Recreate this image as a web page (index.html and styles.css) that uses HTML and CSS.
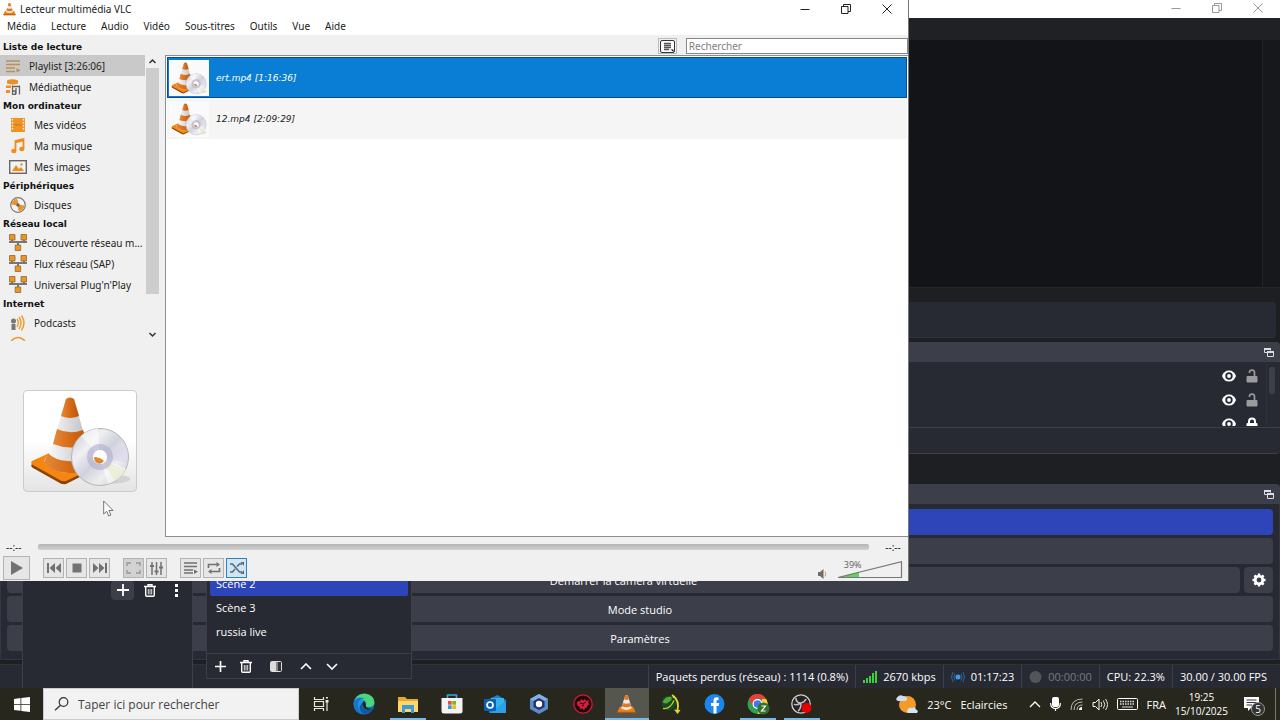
FILE: index.html
```html
<!DOCTYPE html>
<html lang="fr">
<head>
  <meta charset="UTF-8" />
  <meta name="viewport" content="width=device-width, initial-scale=1.0" />
  <title>Lecteur multimédia VLC</title>
  <link rel="stylesheet" href="styles.css">
</head>
<body>
  <!-- shared icons -->
  <svg class="defs" aria-hidden="true">
    <defs>
      <linearGradient id="gOrange" x1="0" x2="1"><stop offset="0" stop-color="#e58a3a"/><stop offset=".5" stop-color="#d66a16"/><stop offset="1" stop-color="#b9560c"/></linearGradient>
      <linearGradient id="gWhite" x1="0" x2="1"><stop offset="0" stop-color="#fff"/><stop offset=".4" stop-color="#e4e4e6"/><stop offset="1" stop-color="#b5b5b8"/></linearGradient>
      <linearGradient id="gDisc" x1="0" y1="0" x2="1" y2="1"><stop offset="0" stop-color="#c4c4cc"/><stop offset=".3" stop-color="#f0f0f4"/><stop offset=".5" stop-color="#cfd2dc"/><stop offset=".7" stop-color="#eeeef0"/><stop offset="1" stop-color="#c2c4c4"/></linearGradient>
      <linearGradient id="gEdge" x1="0" y1="0" x2="1" y2="1"><stop offset="0" stop-color="#36c1d8"/><stop offset=".5" stop-color="#1a8ad8"/><stop offset="1" stop-color="#0c4c98"/></linearGradient>
      <symbol id="cone" viewBox="0 0 20 20">
        <path d="M3 13h14l2.500 5.500q.2 1-.8 1H1.300q-1 0-.8-1z" fill="#f08014"/>
        <path d="M.6 18.200h18.800v1.300H.6z" fill="#b9540a"/>
        <path d="M8.600 1q1.400-.8 2.800 0l4.200 13.600q-5.600 3.400-11.200 0z" fill="#e9e9e9"/>
        <path d="M8.600 1q1.400-.8 2.800 0l1.200 4q-2.600 1.200-5.200 0zM6.200 8.900q3.800 1.600 7.600 0l1.100 3.500q-4.900 2.300-9.800 0z" fill="#e5771a"/>
      </symbol>
      <symbol id="conedisc" viewBox="0 0 112 100">
        <ellipse cx="84" cy="88" rx="22" ry="5" fill="#000" opacity=".1"/>
        <path d="M8 73 32 61l44 15-34 17q-4 1-8-2L9 77q-3-2-1-4z" fill="#8a4206"/>
        <path d="M8 70 32 59l44 15-34 16q-4 1-8-2L9 74q-3-2-1-4z" fill="#f5860f"/>
        <path d="M42 8q4-3 8 0l19 67q-8 8-24 7-20-1-25-12l8-14z" fill="url(#gWhite)"/>
        <path d="M42 8q4-3 8 0l5 17q-9 4-18 0z" fill="url(#gOrange)"/>
        <path d="M33 38q13 6 26 1l5 14q-17 7-35 0z" fill="url(#gOrange)"/>
        <path d="M24 62q6 7 20 8 15 1 23-3l3 8q-8 8-25 7-20-1-25-11z" fill="url(#gOrange)"/>
        <circle cx="76" cy="66" r="28.500" fill="url(#gDisc)" stroke="#b4b5b8"/>
        <path d="M76 66 57 45q8-7 17-8zM76 66l8 27q13-4 18-15z" fill="#fff" opacity=".55"/>
        <path d="M76 66 102 54q3 8 1 18z" fill="#d6d2ea" opacity=".5"/>
        <path d="M76 66l15 24q6-3 10-10z" fill="#e8ebc8" opacity=".6"/>
        <circle cx="76" cy="66" r="10" fill="none" stroke="#b4b1d0" stroke-width="6" opacity=".65"/>
        <circle cx="76" cy="66" r="7" fill="#fff"/>
        <path d="M70 66q6 0 10 4-3 4-7 2-3-2-3-6z" fill="#dd8830"/>
      </symbol>
      <symbol id="net" viewBox="0 0 18 17">
        <path d="M0 8h18M3 4v4M15 4v4M9 8v4" stroke="#777" stroke-width="2" fill="none"/>
        <path d="M.5 .5h5.500v5.500H.5zM12 .5h5.500v5.500H12zM6.200 11h5.500v5.500H6.200z" fill="#ed951f" stroke="#8a6a3c" stroke-width=".8"/>
      </symbol>
      <symbol id="eye" viewBox="0 0 14 12">
        <path d="M0 6Q2 .5 7 .5T14 6q-2 5.500-7 5.500T0 6z" fill="#fff"/>
        <circle cx="7" cy="6" r="3.700" fill="#272a33"/><circle cx="7" cy="6" r="1.900" fill="#fff"/>
      </symbol>
      <symbol id="unlock" viewBox="0 0 12 14">
        <path d="M3.500 4V3.500a2.500 2.500 0 0 1 5 0V8" fill="none" stroke="#9b9b9d" stroke-width="1.700"/>
        <rect x=".5" y="7" width="11" height="6.500" rx="1" fill="#9b9b9d"/>
      </symbol>
      <symbol id="lock" viewBox="0 0 12 14">
        <path d="M3 7V4.500a3 3 0 0 1 6 0V7" fill="none" stroke="#fff" stroke-width="2"/>
        <rect x=".5" y="6" width="11" height="7.500" rx="1" fill="#fff"/>
      </symbol>
      <symbol id="popout" viewBox="0 0 10 9">
        <path d="M.5 4.500v-4h6v2" fill="none" stroke="#dcdde2"/><path d="M0 0h7v2H0zM3 3h7v2H3z" fill="#dcdde2"/>
        <path d="M3.500 4v4.500h6V4M.5 4.500H3" fill="none" stroke="#dcdde2"/>
      </symbol>
      <symbol id="min" viewBox="0 0 10 10"><path d="M.5 5.500h9" stroke="currentColor" fill="none"/></symbol>
      <symbol id="restore" viewBox="0 0 10 10"><path d="M.5 2.500h6.500v7H.5zM2.500 2.500v-2h7v7H7" stroke="currentColor" fill="none"/></symbol>
      <symbol id="close" viewBox="0 0 10 10"><path d="M.5.5l9 9M9.500.5l-9 9" stroke="currentColor" fill="none"/></symbol>
      <symbol id="plus" viewBox="0 0 12 12"><path d="M6 0v12M0 6h12" stroke="#fff" stroke-width="1.800"/></symbol>
      <symbol id="trash" viewBox="0 0 12 13"><path d="M0 2.500h12M4 2V.7h4V2M1.700 3v8.300q0 1 1 1h6.600q1 0 1-1V3" fill="none" stroke="#fff" stroke-width="1.400"/><path d="M4.300 5v5.500M6 5v5.500M7.700 5v5.500" stroke="#ddd"/></symbol>
    </defs>
  </svg>

  <div class="desktop">
    <main class="workspace">

      <!-- OBS -->
      <section class="obs">
        <div class="obs-title win-buttons">
          <button aria-label="Réduire"><svg width="10" height="10"><use href="#min"/></svg></button>
          <button aria-label="Restaurer"><svg width="10" height="10"><use href="#restore"/></svg></button>
          <button aria-label="Fermer"><svg width="10" height="10"><use href="#close"/></svg></button>
        </div>
        <div class="obs-menu"></div>
        <div class="preview"><div class="preview-canvas"></div><div class="preview-scroll"></div></div>
        <div class="preview-hscroll"></div>
        <div class="obs-toolbar"></div>

        <div class="dock sources">
          <div class="dock-head"><svg width="10" height="9"><use href="#popout"/></svg></div>
          <div class="source-list">
            <div class="source-rows">
              <div class="source"><svg width="14" height="12"><use href="#eye"/></svg><svg width="12" height="14"><use href="#unlock"/></svg></div>
              <div class="source"><svg width="14" height="12"><use href="#eye"/></svg><svg width="12" height="14"><use href="#unlock"/></svg></div>
              <div class="source"><svg width="14" height="12"><use href="#eye"/></svg><svg width="12" height="14"><use href="#lock"/></svg></div>
            </div>
            <div class="source-scroll"><div class="thumb"></div></div>
          </div>
          <div class="source-foot"></div>
        </div>

        <div class="dock controls">
          <div class="dock-head"><svg width="10" height="9"><use href="#popout"/></svg></div>
          <div class="control-list">
            <button class="obs-btn active" aria-label="Arrêter le stream"></button>
            <button class="obs-btn" aria-label="Enregistrement"></button>
            <div class="control-row">
              <button class="obs-btn">Démarrer la caméra virtuelle</button>
              <button class="obs-btn gear" aria-label="Configurer">
                <svg width="14" height="14" viewBox="0 0 14 14"><circle cx="7" cy="7" r="3.800" fill="none" stroke="#fff" stroke-width="2.800"/><path d="M7 .5v2M7 11.500v2M.5 7h2M11.500 7h2M2.400 2.400l1.400 1.400M10.200 10.200l1.400 1.400M2.400 11.600l1.400-1.400M10.200 3.800l1.400-1.400" stroke="#fff" stroke-width="2.400"/></svg>
              </button>
            </div>
            <button class="obs-btn">Mode studio</button>
            <button class="obs-btn">Paramètres</button>
          </div>
        </div>

        <footer class="obs-status">
          <span>Paquets perdus (réseau) : 1114 (0.8%)</span>
          <span><svg width="14" height="12" viewBox="0 0 14 12"><path d="M0 9h2v3H0zM3 7h2v5H3zM6 5h2v7H6zM9 2h2v10H9zM12 0h2v12h-2z" fill="#3bd23b"/></svg>2670 kbps</span>
          <span><svg width="14" height="12" viewBox="0 0 14 12"><circle cx="7" cy="6" r="2.500" fill="#3f9bea"/><path d="M4 2.500q-2.300 3.500 0 7M10 2.500q2.300 3.500 0 7M2 1q-3 5 0 10M12 1q3 5 0 10" fill="none" stroke="#2b66a2"/></svg>01:17:23</span>
          <span class="off"><svg width="13" height="12" viewBox="0 0 13 12"><circle cx="6.500" cy="6" r="6" fill="#53555b"/></svg>00:00:00</span>
          <span>CPU: 22.3%</span>
          <span>30.00 / 30.00 FPS</span>
        </footer>
      </section>

      <!-- floating OBS docks -->
      <section class="float-dock mixer">
        <button class="tool hot" aria-label="Ajouter"><svg width="12" height="12"><use href="#plus"/></svg></button>
        <button class="tool" aria-label="Supprimer"><svg width="12" height="13"><use href="#trash"/></svg></button>
        <button class="tool" aria-label="Options"><svg width="4" height="13" viewBox="0 0 4 13"><path d="M0 0h3v3H0zM0 5h3v3H0zM0 10h3v3H0z" fill="#fff"/></svg></button>
      </section>
      <section class="float-dock scenes">
        <ul>
          <li class="selected">Scène 2</li>
          <li>Scène 3</li>
          <li>russia live</li>
        </ul>
        <div class="scene-tools">
          <button aria-label="Ajouter"><svg width="11" height="11"><use href="#plus"/></svg></button>
          <button aria-label="Supprimer"><svg width="12" height="13"><use href="#trash"/></svg></button>
          <button class="apart" aria-label="Filtres"><svg width="12" height="11" viewBox="0 0 12 11"><rect x=".5" y=".5" width="11" height="10" rx="1" fill="#30333c" stroke="#ddd"/><path d="M1 1h5v9H1z" fill="#ddd"/><path d="M6 1h2v9H6z" fill="#888"/></svg></button>
          <button class="apart" aria-label="Monter"><svg width="12" height="7" viewBox="0 0 12 7"><path d="M1 6l5-5 5 5" fill="none" stroke="#fff" stroke-width="1.600"/></svg></button>
          <button aria-label="Descendre"><svg width="12" height="7" viewBox="0 0 12 7"><path d="M1 1l5 5 5-5" fill="none" stroke="#fff" stroke-width="1.600"/></svg></button>
        </div>
      </section>

      <!-- VLC -->
      <section class="vlc">
        <header class="vlc-title">
          <svg width="13" height="14"><use href="#cone"/></svg>
          <h1>Lecteur multimédia VLC</h1>
          <div class="win-buttons">
            <button aria-label="Réduire"><svg width="10" height="10"><use href="#min"/></svg></button>
            <button aria-label="Restaurer"><svg width="10" height="10"><use href="#restore"/></svg></button>
            <button aria-label="Fermer"><svg width="10" height="10"><use href="#close"/></svg></button>
          </div>
        </header>
        <nav class="vlc-menu">
          <a href="#">Média</a><a href="#">Lecture</a><a href="#">Audio</a><a href="#">Vidéo</a><a href="#">Sous-titres</a><a href="#">Outils</a><a href="#">Vue</a><a href="#">Aide</a>
        </nav>

        <div class="vlc-body">
          <aside class="sidebar">
            <h2>Liste de lecture</h2>
            <div class="tree-wrap">
              <div class="tree">
                <a href="#" class="item top selected"><svg width="15" height="14" viewBox="0 0 15 14"><path d="M0 2h14M0 5.500h14M0 9h9M0 12.500h9" stroke="#b8925a" stroke-width="1.500"/><path d="M10.500 9l4 2.300-4 2.300z" fill="#b8925a"/></svg>Playlist [3:26:06]</a>
                <a href="#" class="item top"><svg width="15" height="16" viewBox="0 0 15 16"><path d="M1 1.500Q6-1 12 1.500v3Q7 6.500 1 4.500zM0 6.500h5v2.500H0zM0 11h4v3H0z" fill="#ee8f20"/><path d="M6.500 6.500v9M13.500 6.500v9M6.500 7.500h7M6 12h3.500v3.500H6M10 9v6" stroke="#666" stroke-width="1.300" fill="none"/></svg>Médiathèque</a>
                <h2>Mon ordinateur</h2>
                <a href="#" class="item"><svg width="18" height="14" viewBox="0 0 18 14"><path d="M2 0h14v14H2z" fill="#f09322"/><path d="M3.500 1v12M14.500 1v12" stroke="#efefef" stroke-width="1.400" stroke-dasharray="1.500 1.500"/><path d="M5 7h8" stroke="#c77a1c"/></svg>Mes vidéos</a>
                <a href="#" class="item"><svg width="18" height="16" viewBox="0 0 18 16"><path d="M6.500 13V3l8-2v10M6.500 4.500l8-2" fill="none" stroke="#f08c1a" stroke-width="1.800"/><ellipse cx="4.800" cy="13" rx="2.600" ry="2.200" fill="#f08c1a"/><ellipse cx="12.800" cy="11" rx="2.600" ry="2.200" fill="#f08c1a"/></svg>Ma musique</a>
                <a href="#" class="item"><svg width="18" height="14" viewBox="0 0 18 14"><rect x=".7" y=".7" width="16.600" height="12.600" fill="#f4f4f4" stroke="#666" stroke-width="1.400"/><path d="M3 11l4-6 3 4 2-2 3 4z" fill="#ee8d1c"/><circle cx="12.500" cy="4.500" r="1.200" fill="#ee8d1c"/></svg>Mes images</a>
                <h2>Périphériques</h2>
                <a href="#" class="item"><svg width="18" height="16" viewBox="0 0 18 16"><circle cx="9" cy="8" r="7.300" fill="#f2f2f2" stroke="#777" stroke-width="1.200"/><path d="M9 8 3 7Q4 2.500 8 2.500zM9 8l6 1q-1 4.500-5 4.500z" fill="#ee9422" stroke="#ee9422"/><circle cx="9" cy="8" r="1.800" fill="#666"/></svg>Disques</a>
                <h2>Réseau local</h2>
                <a href="#" class="item"><svg width="18" height="17"><use href="#net"/></svg>Découverte réseau m...</a>
                <a href="#" class="item"><svg width="18" height="17"><use href="#net"/></svg>Flux réseau (SAP)</a>
                <a href="#" class="item"><svg width="18" height="17"><use href="#net"/></svg>Universal Plug'n'Play</a>
                <h2>Internet</h2>
                <a href="#" class="item"><svg width="18" height="16" viewBox="0 0 18 16"><circle cx="4.500" cy="6" r="2.500" fill="#777"/><path d="M2.500 9h4v6h-4z" fill="#777"/><path d="M8 4q2.500 3.500 0 8M10 2q4 6 0 12M12.500.5q5 7 0 15" fill="none" stroke="#ef9a2c" stroke-width="1.400"/></svg>Podcasts</a>
                <a href="#" class="item" aria-label="Radios"><svg width="18" height="18" viewBox="0 0 18 18"><path d="M2 6q7-7 14 0M5 10q4-4 8 0" fill="none" stroke="#ef9a2c" stroke-width="1.500"/></svg></a>
              </div>
              <div class="tree-scroll">
                <svg width="13" height="13" viewBox="0 0 13 13"><path d="M3.500 8l3-3 3 3" fill="none" stroke="#333" stroke-width="1.500"/></svg>
                <div class="track"><div class="thumb"></div></div>
                <svg width="13" height="13" viewBox="0 0 13 13"><path d="M3.500 5l3 3 3-3" fill="none" stroke="#333" stroke-width="1.500"/></svg>
              </div>
            </div>
            <div class="art"><div class="cover"><svg width="112" height="100"><use href="#conedisc"/></svg></div></div>
          </aside>

          <div class="main">
            <div class="main-tools">
              <button class="view-btn" aria-label="Affichage"><svg width="15" height="13" viewBox="0 0 15 13"><rect x=".5" y=".5" width="14" height="12" rx="1.500" fill="#fff" stroke="#333"/><path d="M4 3.500h7M4 5.500h7M4 7.500h7M4 9.500h5" stroke="#555" stroke-width="1.300"/><path d="M10.500 9.500h3v2.500z" fill="#111"/></svg></button>
              <input class="search" type="text" placeholder="Rechercher" aria-label="Rechercher">
            </div>
            <div class="playlist">
              <div class="track-row selected"><span class="mini"><svg width="40" height="36"><use href="#conedisc"/></svg></span>ert.mp4 [1:16:36]</div>
              <div class="track-row"><span class="mini"><svg width="40" height="36"><use href="#conedisc"/></svg></span>12.mp4 [2:09:29]</div>
            </div>
          </div>
        </div>

        <div class="seek">
          <span>--:--</span>
          <input type="range" min="0" max="100" value="0" disabled aria-label="Position">
          <span>--:--</span>
        </div>
        <div class="vlc-controls">
          <button class="play" aria-label="Lire"><svg width="14" height="14" viewBox="0 0 14 14"><path d="M1 0l12 7-12 7z" fill="#727272"/></svg></button>
          <div class="group">
            <button aria-label="Précédent"><svg width="14" height="10" viewBox="0 0 14 10"><path d="M0 0h2v10H0zM8 0v10L2.500 5zM14 0v10L8.500 5z" fill="#727272"/></svg></button>
            <button aria-label="Arrêter"><svg width="10" height="10" viewBox="0 0 10 10"><path d="M.5.5h9v9h-9z" fill="#727272"/></svg></button>
            <button aria-label="Suivant"><svg width="14" height="10" viewBox="0 0 14 10"><path d="M12 0h2v10h-2zM0 0v10l5.500-5zM6 0v10l5.500-5z" fill="#727272"/></svg></button>
          </div>
          <div class="group">
            <button class="disabled" aria-label="Plein écran"><svg width="15" height="12" viewBox="0 0 15 12"><path d="M1 4V1h4M10 1h4v3M14 8v3h-4M5 11H1V8" fill="none" stroke="#a4a4a4" stroke-width="1.800"/></svg></button>
            <button aria-label="Réglages"><svg width="15" height="13" viewBox="0 0 15 13"><path d="M3 0v13M7.500 0v13M12 0v13" stroke="#727272" stroke-width="1.500"/><path d="M1 3h4v2H1zM5.500 8.500h4v2h-4zM10 4.500h4v2h-4z" fill="#727272"/></svg></button>
          </div>
          <div class="group">
            <button aria-label="Liste de lecture"><svg width="14" height="12" viewBox="0 0 14 12"><path d="M0 1h13M0 4.500h13M0 8h9M0 11h9" stroke="#727272" stroke-width="1.500"/><path d="M10 7.500l4 2.200-4 2.200z" fill="#727272"/></svg></button>
            <button aria-label="Répéter"><svg width="14" height="12" viewBox="0 0 14 12"><path d="M1.500 6V2.500H11M12.500 6v3.500H3" fill="none" stroke="#727272" stroke-width="1.700"/><path d="M9.500 0l3.500 2.500L9.500 5zM4.500 7L1 9.500 4.500 12z" fill="#727272"/></svg></button>
            <button class="on" aria-label="Aléatoire"><svg width="14" height="12" viewBox="0 0 14 12"><path d="M0 2h2.500l7 8H12M0 10h2.500L5 7M7 4.500L9.500 2H12" fill="none" stroke="#5f6a72" stroke-width="1.600"/><path d="M10.500 0H14v4zM10.500 12H14V8z" fill="#5f6a72"/></svg></button>
          </div>
          <div class="volume">
            <svg width="10" height="10" viewBox="0 0 10 10"><path d="M0 3h2l3.500-3v10L2 7H0z" fill="#6d6d6d"/><path d="M7 2.500q1.500 2.500 0 5" fill="none" stroke="#d79a52"/></svg>
            <div class="ramp">
              <svg width="66" height="18" viewBox="0 0 66 18"><path d="M1 16.500 22 11v5.500z" fill="#5fd35f"/><path d="M1 16.500 64.500.7v15.800z" fill="none" stroke="#777" stroke-width="1.200"/></svg>
              <span class="percent">39%</span>
              <input type="range" min="0" max="125" value="39" aria-label="Volume">
            </div>
          </div>
        </div>
      </section>

      <svg class="cursor" width="12" height="17" viewBox="0 0 12 17"><path d="M.7 1v13l3-2.700 2 4.700 2.200-1-2-4.500h4.200z" fill="#fff" stroke="#555" stroke-width=".8"/></svg>
    </main>

    <!-- Windows taskbar -->
    <footer class="taskbar">
      <button class="start" aria-label="Démarrer"><svg width="16" height="15" viewBox="0 0 16 15"><path d="M0 2l6.500-.9V7H0zM7.300 1 16 0v7H7.300zM0 7.800h6.500v6L0 13zM7.300 7.800H16V15l-8.700-1.100z" fill="#fff"/></svg></button>
      <label class="task-search">
        <svg width="15" height="14" viewBox="0 0 15 14"><circle cx="9.500" cy="5" r="4.300" fill="none" stroke="#333" stroke-width="1.200"/><path d="M6.500 8.200 1 13.300" stroke="#333" stroke-width="1.300"/></svg>
        <input type="text" placeholder="Taper ici pour rechercher" aria-label="Taper ici pour rechercher">
      </label>
      <button class="start" aria-label="Affichage des tâches"><svg width="16" height="14" viewBox="0 0 16 14"><path d="M1.500 0v2.500h9V0M1.500 14v-2.500h9V14M1.500 4.500h9v5h-9zM14 5v9" fill="none" stroke="#e8e8e8" stroke-width="1.200"/><path d="M13 0h2v1.500h-2zM12.500 3h3v2.500h-3z" fill="#e8e8e8"/></svg></button>

      <div class="apps">
        <button aria-label="Edge"><svg width="22" height="22" viewBox="0 0 22 22"><circle cx="11" cy="11" r="10.500" fill="url(#gEdge)"/><path d="M2 7Q6 0 13 .8q8.500 2 8.500 8.700-.5 4.500-5.500 4.500-4 0-3.200-2 1.200-3-1.800-5T2 7z" fill="#4bd57c"/><path d="M1 8q5-6 11-2-6-1-7 5-.5 6 5 10Q1 20 .7 11z" fill="#1676cf"/><path d="M9 10q-2 8 11 6-4 5.500-10 4.500-6-5-1-10.500z" fill="#0f57a8"/><path d="M11 8q-3 2-1 6 3 4 9 2-4 0-6-2 0-2-.2-2.500Q13.500 10 11 8z" fill="#27271d"/></svg></button>
        <button class="running" aria-label="Explorateur"><svg width="20" height="17" viewBox="0 0 20 17"><path d="M0 1h7l2 2h11v13H0z" fill="#e5a92d"/><path d="M0 5h20v11H0z" fill="#fbd668"/><path d="M4 9h12v8h-3v-4H7v4H4z" fill="#3d9bd9"/></svg></button>
        <button aria-label="Store"><svg width="22" height="20" viewBox="0 0 22 20"><path d="M6.500 5V1h9v4" fill="none" stroke="#35a8dd" stroke-width="1.600"/><path d="M.5 4h21v13q0 2.500-2.500 2.500H3Q.5 19.500.5 17z" fill="#f4f4f4"/><path d="M7 7h3.700v3.700H7z" fill="#e8502c"/><path d="M11.300 7H15v3.700h-3.700z" fill="#7cb51e"/><path d="M7 11.300h3.700V15H7z" fill="#2a9fe0"/><path d="M11.300 11.300H15V15h-3.700z" fill="#f5b81e"/></svg></button>
        <button aria-label="Outlook"><svg width="22" height="18" viewBox="0 0 22 18"><path d="M5 4l8.500-4L22 5v13H5z" fill="#1d7fd0"/><path d="M7 3h13v7l-7 4-6-4z" fill="#35b3ec"/><path d="M22 6v12H6z" fill="#2ca0e4"/><rect y="4" width="12" height="12" rx="1" fill="#0d5fb5"/><circle cx="6" cy="10" r="3" fill="none" stroke="#fff" stroke-width="1.700"/></svg></button>
        <button aria-label="Sécurité"><svg width="20" height="20" viewBox="0 0 20 20"><path d="M10 0l9 5v10l-9 5-9-5V5z" fill="#5c8cc9"/><path d="M10 0l9 5-9 5-9-5z" fill="#83b2e4"/><path d="M10 4l5.500 3v6L10 16l-5.500-3V7z" fill="#25345e"/><circle cx="10" cy="10" r="3.200" fill="#fff"/></svg></button>
        <button aria-label="Jeu"><svg width="20" height="20" viewBox="0 0 20 20"><circle cx="10" cy="10" r="9.200" fill="#23090d" stroke="#c41f37" stroke-width="1.300"/><path d="M4 9l1-2 2 .5L8 5l2 1.500L12 5l1 2 3-1-1 3 1.500 1-2 1.500-.5 2-2 .5-1 2-1.500-1.500L7 15l-.5-2.500L4.500 12z" fill="#d41e3a"/><path d="M7 9l3 1 3-2M9 12l2-1" stroke="#23090d" fill="none"/></svg></button>
        <button class="running current" aria-label="VLC"><svg width="19" height="20"><use href="#cone"/></svg></button>
        <button aria-label="JDownloader"><svg width="20" height="20" viewBox="0 0 20 20"><circle cx="8" cy="9" r="7.500" fill="#154a26"/><path d="M1.500 8q3-6 9-5 1 4-3 5-2 3-6 0z" fill="#56a534"/><path d="M11 1q2 1 2 3M12.500 2q6 5 4 14" fill="none" stroke="#e8d436" stroke-width="1.800"/><path d="M13 15.500l6.500.5-3 4z" fill="#e8d436"/><path d="M2 14.500q7 1 11-8" fill="none" stroke="#d9c72c" stroke-width="1.300"/></svg></button>
        <button aria-label="Facebook"><svg width="21" height="20" viewBox="0 0 21 20"><circle cx="10.500" cy="10" r="10" fill="#1c86ee"/><path d="M14.500 6V3.500q-5-.8-5 3V9H7v3h2.500v7.500h3V12h2.200l.5-3h-2.700V7q0-1.200 2-1z" fill="#fff"/></svg></button>
        <button class="running" aria-label="Chrome"><svg width="23" height="21" viewBox="0 0 23 21"><circle cx="10.500" cy="10" r="10" fill="#2fa14f"/><path d="M1.800 5a10 10 0 0 1 17.400 0H10.500L6 12.500z" fill="#e2423a"/><path d="M19.200 5a10 10 0 0 1-9 15L15 12V5z" fill="#f8cd3c"/><circle cx="10.500" cy="10" r="5" fill="#fff"/><circle cx="10.500" cy="10" r="3.800" fill="#3b7de8"/><circle cx="16.500" cy="14.500" r="6" fill="#33702b"/><path d="M14.500 12h4l-4 5h4" fill="none" stroke="#fff" stroke-width="1.200"/></svg></button>
        <button class="running" aria-label="OBS"><svg width="22" height="20" viewBox="0 0 22 20"><circle cx="10" cy="10" r="9.200" fill="#252326" stroke="#cfcfcf" stroke-width="1.300"/><path d="M5 4q0 5 5 5 4-1 5-4M10 9q-5 3-7 1M10 9q0 6-3 8" fill="none" stroke="#bdbdbd" stroke-width="1.600"/><circle cx="15.500" cy="14" r="5" fill="#e80000"/></svg></button>
      </div>

      <div class="tray">
        <svg width="22" height="19" viewBox="0 0 22 19"><circle cx="11.500" cy="9.500" r="8.500" fill="#f29b27"/><path d="M2 6q-3-1-1-3.500Q4-1 7 1q4 0 4 3 0 2-2 2z" fill="#cfdcf2"/><path d="M12 18q-2-1-.5-3 1-3 4.500-2 3-2 4 1.500 3 1 1 3.500z" fill="#d7e2f5"/></svg>
        <span>23°C</span>
        <span class="weather">Eclaircies</span>
        <svg width="12" height="7" viewBox="0 0 12 7"><path d="M1 6l5-5 5 5" fill="none" stroke="#fff" stroke-width="1.300"/></svg>
        <svg width="11" height="14" viewBox="0 0 11 14"><rect x="2" width="7" height="10" rx="2" fill="#fff"/><path d="M.6 6q0 5.500 4.900 5.500T10.400 6M5.500 11v3" fill="none" stroke="#fff" stroke-width="1.200"/></svg>
        <svg width="13" height="12" viewBox="0 0 13 12"><path d="M1 12Q1 1 12.500 1M4 12q0-8 8.500-8M7 12q0-5 5.500-5" fill="none" stroke="#bbb"/><path d="M9 12q0-3 3-3v3z" fill="#fff"/></svg>
        <svg width="16" height="13" viewBox="0 0 16 13"><path d="M1 4.500h2.500L7 1v11L3.500 8.500H1z" fill="none" stroke="#fff"/><path d="M9 4q1.500 2.500 0 5M11.300 2.500q3 4 0 8M13.500 1q4 5.500 0 11" fill="none" stroke="#e8e8e8"/></svg>
        <svg width="21" height="12" viewBox="0 0 21 12"><rect x=".5" y=".5" width="20" height="11" rx="1" fill="none" stroke="#fff"/><path d="M3 3.500h15M3 6h15" stroke="#ddd" stroke-width="1.500" stroke-dasharray="1.500 1"/><path d="M5 9h11" stroke="#ddd"/></svg>
        <span>FRA</span>
        <time class="clock">19:25<br>15/10/2025</time>
        <button class="notif" aria-label="Notifications"><svg width="15" height="14" viewBox="0 0 15 14"><path d="M0 0h15v11H7l-3 3v-3H0z" fill="#fff"/><path d="M2.500 3h10M2.500 5.500h10M2.500 8H8" stroke="#333"/></svg><span class="badge">5</span></button>
      </div>
    </footer>
  </div>
</body>
</html>
```
FILE: styles.css
```css
* {
  box-sizing: border-box;
}
body {
  margin: 0;
  font-family: 'Open Sans', 'Noto Sans', sans-serif;
  font-size: 11px;
  color: #fff;
}
button {
  margin: 0;
  padding: 0;
  border: none;
  background: none;
  color: inherit;
  font: inherit;
  display: flex;
  align-items: center;
  justify-content: center;
}
a {
  color: inherit;
  text-decoration: none;
}
h1, h2, ul {
  margin: 0;
  padding: 0;
  list-style: none;
}
svg {
  display: block;
  flex: none;
}
.defs {
  position: absolute;
  width: 0;
  height: 0;
}
.desktop {
  height: 100vh;
  display: flex;
  flex-direction: column;
  overflow: hidden;
}
.workspace {
  flex: 1;
  min-height: 0;
  position: relative;
  overflow: hidden;
}
.win-buttons {
  display: flex;
  justify-content: flex-end;
}
.win-buttons button {
  width: 41px;
  height: 16px;
}

/* OBS */
.obs {
  height: 100%;
  display: flex;
  flex-direction: column;
  background: #1e1f22;
}
.obs-title {
  height: 18px;
  padding-right: 2px;
  background: #fff;
  color: #999;
}
.obs-menu {
  height: 22px;
  background: #1f2124;
}
.preview {
  flex: 1;
  display: flex;
  min-height: 0;
}
.preview-canvas {
  flex: 1;
  background: #131417;
}
.preview-scroll {
  width: 18px;
  background: #17181b;
  border-left: 1px solid #232428;
}
.preview-hscroll {
  height: 15px;
  border-top: 1px solid #25262a;
}
.obs-toolbar {
  height: 36px;
  margin: 0 4px 4px 0;
  background: #272a33;
  border-bottom: 1px solid #30323b;
  border-radius: 4px;
}
.dock {
  background: #272a33;
  border-radius: 4px;
}
.dock-head {
  height: 20px;
  padding: 0 6px;
  background: #3c3e4a;
  border-radius: 4px 4px 0 0;
  display: flex;
  align-items: center;
  justify-content: flex-end;
}
.sources {
  margin-bottom: 30px;
  border-bottom: 1px solid #3c3e4a;
}
.source-list {
  height: 66px;
  padding: 1px 0;
  display: flex;
  border-bottom: 1px solid #3c3e4a;
}
.source-rows {
  flex: 1;
  overflow: hidden;
}
.source {
  height: 24px;
  padding: 2px 8px 0 0;
  display: flex;
  align-items: center;
  justify-content: flex-end;
  gap: 10px;
}
.source-scroll {
  width: 14px;
  padding: 4px 4px 0 2px;
  border-left: 1px solid #30323b;
}
.source-scroll .thumb {
  width: 6px;
  height: 27px;
  background: #3c3e4a;
  border-radius: 2px;
}
.source-foot {
  height: 25px;
}
.control-list {
  padding: 5px 6px 8px;
  display: flex;
  flex-direction: column;
  gap: 3px;
  border: 1px solid #343640;
  border-top: none;
}
.obs-btn {
  flex: 1;
  min-height: 26px;
  background: #3c3e4a;
  border-radius: 4px;
}
.obs-btn.active {
  background: #2d45b8;
}
.control-row {
  display: flex;
  gap: 4px;
}
.obs-btn.gear {
  flex: none;
  width: 29px;
}
.obs-status {
  height: 24px;
  margin-top: 4px;
  padding-right: 6px;
  background: #272a33;
  border-top: 1px solid #30323b;
  display: flex;
  justify-content: flex-end;
}
.obs-status span {
  padding: 0 7px;
  border-left: 1px solid #3c3e4a;
  display: flex;
  align-items: center;
  gap: 6px;
}
.obs-status .off {
  color: #777980;
}

/* floating docks */
.float-dock {
  position: absolute;
  background: #272a33;
  border: 1px solid #3c3e4a;
}
.mixer {
  left: 22px;
  bottom: 0;
  width: 171px;
  height: 109px;
  padding-right: 4px;
  border-bottom: none;
  display: flex;
  justify-content: flex-end;
  gap: 4px;
}
.mixer .tool {
  width: 23px;
  height: 20px;
}
.mixer .tool.hot {
  background: #3c3e4a;
  border-radius: 4px;
}
.scenes {
  left: 206px;
  bottom: 9px;
  width: 206px;
}
.scenes ul {
  padding: 0 3px 9px;
}
.scenes li {
  height: 24px;
  line-height: 24px;
  padding-left: 6px;
  border-radius: 2px;
}
.scenes .selected {
  background: #2d45b8;
}
.scene-tools {
  height: 25px;
  padding: 0 8px;
  border-top: 1px solid #3c3e4a;
  display: flex;
  align-items: center;
  gap: 14px;
}
.scene-tools .apart {
  margin-left: 4px;
}

/* VLC */
.vlc {
  position: absolute;
  top: 0;
  left: 0;
  bottom: 107px;
  width: 71%;
  display: flex;
  flex-direction: column;
  background: #f0f0f0;
  border-right: 1px solid #777;
  color: #222;
  font-family: 'Noto Sans', 'Open Sans', sans-serif;
  font-size: 10px;
}
.vlc-title {
  height: 18px;
  padding-left: 3px;
  background: #fff;
  display: flex;
  align-items: center;
  gap: 4px;
}
.vlc-title h1 {
  flex: 1;
  font-size: 10px;
  font-weight: 400;
}
.vlc-menu {
  height: 17px;
  line-height: 17px;
  padding-left: 7px;
  background: #fff;
  display: flex;
  gap: 15px;
}
.vlc-body {
  flex: 1;
  min-height: 0;
  display: flex;
}
.sidebar {
  width: 165px;
  padding: 3px 6px 0 0;
  display: flex;
  flex-direction: column;
}
.sidebar h2 {
  height: 17px;
  line-height: 18px;
  padding-left: 3px;
  font-family: 'DejaVu Sans', sans-serif;
  font-size: 9px;
  font-weight: 700;
  color: #111;
}
.tree-wrap {
  flex: 1;
  min-height: 0;
  display: flex;
}
.tree {
  flex: 1;
  min-width: 0;
  overflow: hidden;
}
.item {
  height: 21px;
  padding-left: 9px;
  display: flex;
  align-items: center;
  gap: 7px;
  white-space: nowrap;
}
.item.top {
  padding-left: 6px;
  gap: 8px;
}
.item.selected {
  background: #c9c9c9;
}
.tree-scroll {
  width: 14px;
  padding-left: 1px;
  display: flex;
  flex-direction: column;
}
.tree-scroll .track {
  flex: 1;
}
.tree-scroll .thumb {
  height: 87%;
  background: #cdcdcd;
}
.art {
  height: 196px;
  display: flex;
  align-items: center;
  justify-content: center;
}
.cover {
  width: 114px;
  height: 102px;
  margin-top: 4px;
  background: linear-gradient(#fff 50%, #e4e4e4);
  border: 1px solid #ccc;
  border-radius: 4px;
}
.main {
  flex: 1;
  min-width: 0;
  display: flex;
  flex-direction: column;
}
.main-tools {
  height: 20px;
  padding-top: 3px;
  display: flex;
  justify-content: flex-end;
  gap: 9px;
}
.view-btn {
  width: 19px;
  height: 16px;
  border: 1px solid #bbb;
}
.search {
  width: 222px;
  height: 16px;
  padding: 0 2px;
  border: 1px solid #888;
  background: #fff;
  font: inherit;
}
.search::placeholder {
  color: #808080;
}
.playlist {
  flex: 1;
  padding: 1px 1px 0;
  background: #fff;
  border: 1px solid #8a8d92;
  border-right: none;
  font-family: 'DejaVu Sans', sans-serif;
  font-size: 9px;
  font-style: italic;
}
.track-row {
  height: 41px;
  padding-left: 2px;
  display: flex;
  align-items: center;
  gap: 7px;
  background: #f5f5f5;
}
.track-row.selected {
  background: #0a7dd4;
  border: 1px solid #0c4b90;
  padding-left: 1px;
  color: #fff;
}
.mini {
  background: #fafafa;
}
.seek {
  height: 18px;
  padding: 2px 7px 0 6px;
  display: flex;
  align-items: center;
  gap: 16px;
}
.seek input {
  flex: 1;
  height: 6px;
  margin: 0;
  appearance: none;
  background: linear-gradient(#b5b5b5, #d0d0d0);
  border-radius: 2px;
}
.seek input::-webkit-slider-thumb {
  appearance: none;
  width: 0;
}
.vlc-controls {
  height: 26px;
  padding: 0 5px 0 3px;
  display: flex;
  align-items: center;
  gap: 13px;
}
.vlc-controls button {
  width: 21px;
  height: 20px;
  border: 1px solid #b3b3b3;
  background: #e6e6e6;
}
.vlc-controls .play {
  width: 27px;
  height: 24px;
}
.vlc-controls .disabled {
  background: #d2d2d2;
}
.vlc-controls .on {
  background: #cfe6f7;
  border-color: #2f82bd;
}
.group {
  display: flex;
  gap: 2px;
}
.volume {
  margin-left: auto;
  padding-top: 4px;
  display: flex;
  align-items: flex-end;
  gap: 9px;
}
.ramp {
  position: relative;
}
.ramp input {
  position: absolute;
  inset: 0;
  width: 100%;
  margin: 0;
  opacity: 0;
}
.percent {
  position: absolute;
  left: 7px;
  top: -2px;
  font-size: 9px;
  line-height: 12px;
  color: #666;
}
.cursor {
  position: absolute;
  left: 103px;
  top: 500px;
}

/* taskbar */
.taskbar {
  height: 32px;
  background: #27271d;
  display: flex;
}
.start {
  width: 43px;
}
.task-search {
  width: 256px;
  padding-left: 10px;
  background: #f2f2f2;
  border: 1px solid #ccc;
  display: flex;
  align-items: center;
  gap: 9px;
}
.task-search input {
  flex: 1;
  min-width: 0;
  padding: 0;
  border: none;
  background: none;
  font: inherit;
  font-size: 12px;
}
.task-search input::placeholder {
  color: #444;
}
.apps {
  width: 482px;
  display: grid;
  grid-template-columns: repeat(11, 1fr);
}
.apps button {
  position: relative;
}
.apps .running::after {
  content: "";
  position: absolute;
  left: 4px;
  right: 4px;
  bottom: 0;
  height: 2px;
  background: #76b9ed;
}
.apps .current {
  background: #55564e;
}
.apps .current::after {
  left: 0;
  right: 0;
}
.tray {
  margin-left: auto;
  padding-right: 4px;
  display: flex;
  align-items: center;
  gap: 9px;
}
.weather {
  margin-right: 12px;
}
.clock {
  margin-right: -9px;
  font-size: 10px;
  line-height: 14px;
  text-align: center;
}
.notif {
  position: relative;
  width: 48px;
  height: 32px;
  border-right: 1px solid #77776c;
}
.badge {
  position: absolute;
  left: 23px;
  top: 14px;
  width: 14px;
  height: 14px;
  border: 1px solid #999;
  border-radius: 7px;
  background: #333;
  font-size: 10px;
  line-height: 12px;
}
```
